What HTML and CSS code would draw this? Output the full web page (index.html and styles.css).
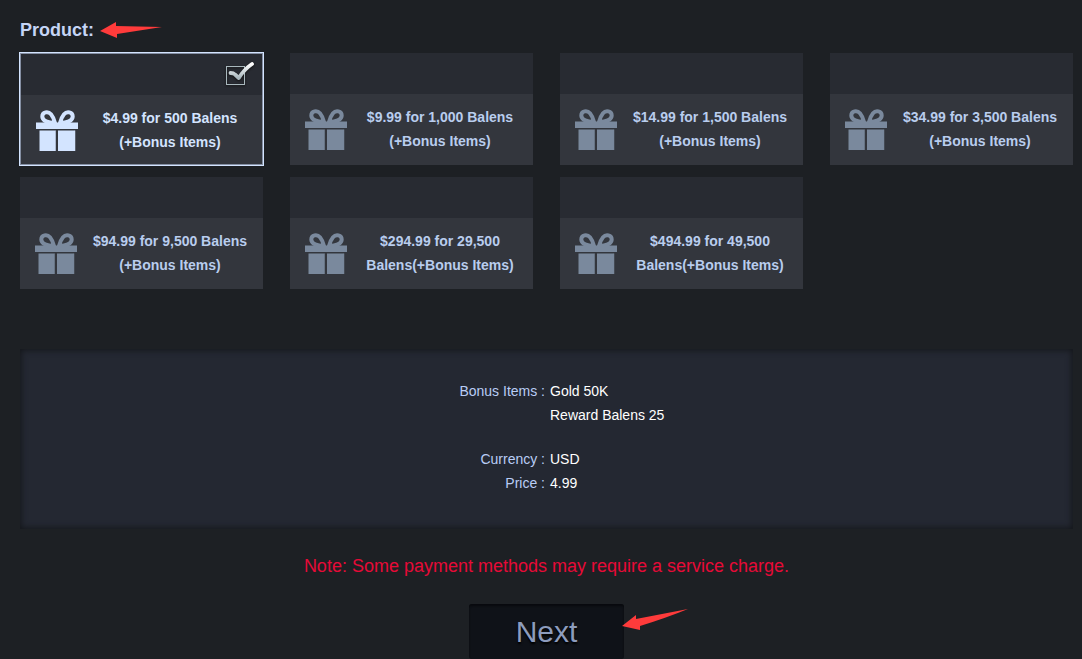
FILE: index.html
```html
<!DOCTYPE html>
<html lang="en">
<head>
<meta charset="utf-8">
<title>Select product</title>
<link rel="stylesheet" href="styles.css">
</head>
<body>
<svg class="defs" aria-hidden="true">
  <symbol id="gift" viewBox="0 0 42 41">
    <path d="M19 13C12 12.500 6.300 11 6.300 6.400C6.300 2 12 .8 15 4.300C17.300 7 18.200 10 19 13Z M24 13C31 12.500 36.700 11 36.700 6.400C36.700 2 31 .8 28 4.300C25.700 7 24.800 10 24 13Z" fill="none" stroke="currentColor" stroke-width="4" stroke-linejoin="round"/>
    <path d="M0 12.500h42V19H0zM4 20.500h15.500V41H4zM22 20.500h17V41H22z" fill="currentColor"/>
    <path d="M3.500 41V20.500M19.500 20.500V41M39 20.500V41" stroke="currentColor" stroke-opacity=".5"/>
  </symbol>
</svg>
<main class="page">
  <form>
    <fieldset class="products">
      <legend class="heading">Product:
        <svg class="arrow" viewBox="0 0 62 16" aria-hidden="true"><path d="M0 9L16 0v4L62 5L17 12v4Z"/></svg>
      </legend>
      <div class="grid">
        <label class="card">
          <input class="radio" type="radio" name="product" checked>
          <span class="strip"><svg class="check" viewBox="0 0 30 26" aria-hidden="true">
            <defs><linearGradient id="metal" x1="0" y1="0" x2="0" y2="1"><stop offset="0" stop-color="#fff"/><stop offset="1" stop-color="#a9b8be"/></linearGradient></defs>
            <rect x="1.500" y="5.500" width="18" height="18" fill="none" stroke="#a9b8bd"/>
            <path d="M5.500 12Q8.500 12 10 13.500L13.800 17Q19 8.500 27 3" fill="none" stroke="url(#metal)" stroke-width="3.800" stroke-linecap="round" stroke-linejoin="round"/>
          </svg></span>
          <span class="body"><svg class="gift" aria-hidden="true"><use href="#gift"/></svg><span class="name">$4.99 for 500 Balens<br>(+Bonus Items)</span></span>
        </label>
        <label class="card">
          <input class="radio" type="radio" name="product">
          <span class="strip"></span>
          <span class="body"><svg class="gift" aria-hidden="true"><use href="#gift"/></svg><span class="name">$9.99 for 1,000 Balens<br>(+Bonus Items)</span></span>
        </label>
        <label class="card">
          <input class="radio" type="radio" name="product">
          <span class="strip"></span>
          <span class="body"><svg class="gift" aria-hidden="true"><use href="#gift"/></svg><span class="name">$14.99 for 1,500 Balens<br>(+Bonus Items)</span></span>
        </label>
        <label class="card">
          <input class="radio" type="radio" name="product">
          <span class="strip"></span>
          <span class="body"><svg class="gift" aria-hidden="true"><use href="#gift"/></svg><span class="name">$34.99 for 3,500 Balens<br>(+Bonus Items)</span></span>
        </label>
        <label class="card">
          <input class="radio" type="radio" name="product">
          <span class="strip"></span>
          <span class="body"><svg class="gift" aria-hidden="true"><use href="#gift"/></svg><span class="name">$94.99 for 9,500 Balens<br>(+Bonus Items)</span></span>
        </label>
        <label class="card">
          <input class="radio" type="radio" name="product">
          <span class="strip"></span>
          <span class="body"><svg class="gift" aria-hidden="true"><use href="#gift"/></svg><span class="name">$294.99 for 29,500<br>Balens(+Bonus Items)</span></span>
        </label>
        <label class="card">
          <input class="radio" type="radio" name="product">
          <span class="strip"></span>
          <span class="body"><svg class="gift" aria-hidden="true"><use href="#gift"/></svg><span class="name">$494.99 for 49,500<br>Balens(+Bonus Items)</span></span>
        </label>
      </div>
    </fieldset>
    <dl class="summary">
      <dt>Bonus Items :</dt>
      <dd class="bonus">Gold 50K<br>Reward Balens 25</dd>
      <dt>Currency :</dt>
      <dd>USD</dd>
      <dt>Price :</dt>
      <dd>4.99</dd>
    </dl>
    <p class="note">Note: Some payment methods may require a service charge.</p>
    <div class="actions">
      <div class="next-wrap">
        <button class="next" type="button">Next</button>
        <svg class="arrow-next" viewBox="0 0 66 21" aria-hidden="true"><path d="M0 17L14 6v4Q40 5 66 0Q44 9 18 17v4Z"/></svg>
      </div>
    </div>
  </form>
</main>
</body>
</html>
```
FILE: styles.css
```css
* {
  box-sizing: border-box;
}

body {
  margin: 0;
  background: #1d2024;
  color: #fff;
  font: 14px/24px "Liberation Sans", Arial, sans-serif;
}

.defs {
  position: absolute;
  width: 0;
  height: 0;
}

.page {
  padding: 18px 9px 0 20px;
}

.products {
  min-width: 0;
  margin: 0;
  padding: 0;
  border: 0;
}

.heading {
  display: flex;
  align-items: center;
  gap: 6px;
  padding: 0;
  color: #c5d5f6;
  font-size: 18px;
  font-weight: bold;
}

.arrow {
  width: 62px;
  height: 16px;
  fill: #ff3b3b;
}

.grid {
  display: grid;
  grid-template-columns: repeat(4, 1fr);
  gap: 12px 27px;
  margin-top: 11px;
}

.card {
  position: relative;
  display: flex;
  flex-direction: column;
  min-height: 112px;
  background: #33363d;
  color: #b9cdee;
  cursor: pointer;
}

.radio {
  position: absolute;
  opacity: 0;
}

.card:has(.radio:checked) {
  border: 1px solid #858fa3;
  box-shadow: 0 0 0 1px #d3e4ff;
  color: #d3e4ff;
}

.strip {
  display: flex;
  justify-content: flex-end;
  height: 41px;
  padding: 7px;
  background: #282b32;
}

.check {
  width: 30px;
  height: 26px;
  filter: drop-shadow(0 1px 1px #111);
}

.body {
  display: flex;
  flex: 1;
  gap: 8px;
  padding: 11px 8px 0 15px;
}

.gift {
  flex: none;
  width: 42px;
  height: 41px;
  margin-top: 4px;
  color: #7a899d;
}

.radio:checked ~ .body .gift {
  color: #d3e4ff;
}

.name {
  flex: 1;
  font-weight: bold;
  text-align: center;
  white-space: nowrap;
}

.summary {
  display: grid;
  grid-template-columns: 1fr 1fr;
  column-gap: 5px;
  margin: 60px 0 0;
  padding: 30px 0 34px 2px;
  background: #242832;
  box-shadow: inset 0 0 6px 1px #14161a;
}

.summary dt {
  color: #b9cdf6;
  text-align: right;
}

.summary dd {
  margin: 0;
}

.summary .bonus {
  margin-bottom: 20px;
}

.note {
  margin: 25px 0 0;
  color: #e60a37;
  font-size: 18px;
  text-align: center;
}

.actions {
  display: flex;
  justify-content: center;
  margin-top: 26px;
}

.next-wrap {
  position: relative;
}

.next {
  display: block;
  width: 155px;
  height: 55px;
  padding: 0;
  border: 0;
  border-radius: 3px;
  background: #0f1218;
  box-shadow: inset 0 2px 2px #090a0e;
  color: #8d9cbd;
  font: 30px/55px "Liberation Sans", Arial, sans-serif;
  text-shadow: 0 2px 2px #000;
}

.arrow-next {
  position: absolute;
  top: 5px;
  left: 153px;
  width: 66px;
  height: 21px;
  fill: #ff3b3b;
}
```
